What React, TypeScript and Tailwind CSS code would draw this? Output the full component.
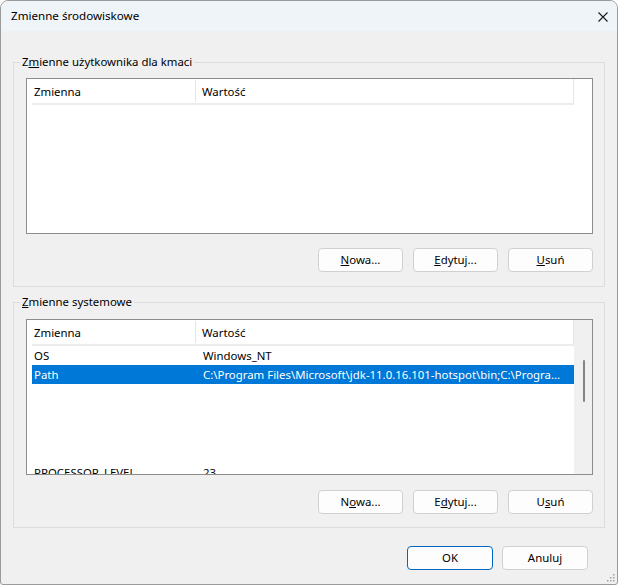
import React from 'react';

const font = { fontFamily: '"Segoe UI", "Noto Sans", sans-serif' };

function Btn({ children, primary }: { children: React.ReactNode; primary?: boolean }) {
  return (
    <div
      className={
        'flex h-[24px] items-center justify-center rounded-[4px] border bg-[#fdfdfd] text-[11.4px] text-black ' +
        (primary ? 'w-[86px] border-[#0067c0]' : 'w-[85px] border-[#d0d0d0]')
      }
    >
      {children}
    </div>
  );
}

function Header() {
  return (
    <div className="flex h-[26px] w-[542px] shrink-0 border-b-2 border-r border-[#ececec] border-r-[#e5e5e5] bg-white text-[11.4px]">
      <div className="my-[1px] flex w-[164px] items-center border-r border-[#e5e5e5] pl-[2px] pt-[2px]">Zmienna</div>
      <div className="flex flex-1 items-center pl-[6px] pt-[2px]">Wartość</div>
    </div>
  );
}

function Row({ name, value, selected }: { name: string; value: string; selected?: boolean }) {
  return (
    <div
      className={
        'flex h-[19px] w-[542px] shrink-0 items-center overflow-hidden text-[11.4px] ' +
        (selected ? 'bg-[#0078d7] text-white' : 'text-black')
      }
    >
      <div className="w-[165px] shrink-0 overflow-hidden whitespace-nowrap pl-[2px]">{name}</div>
      <div className="flex-1 overflow-hidden whitespace-nowrap pl-[6px]">{value}</div>
    </div>
  );
}

export default function App() {
  return (
    <div className="h-[585px] w-[618px] bg-white" style={font}>
      <div className="flex h-[585px] w-[618px] flex-col overflow-hidden rounded-t-[8px] rounded-b-[3px] border border-[#9a9a9a] bg-[#f0f0f0] text-black">
        {/* title bar */}
        <div className="flex h-[30px] shrink-0 items-center justify-between bg-[#eff4f9] pl-[10px] pr-[9px]">
          <span className="text-[11.6px]">Zmienne środowiskowe</span>
          <svg width="10" height="10" viewBox="0 0 10 10" className="mt-[1px]">
            <path d="M0.5 0.5 L9.5 9.5 M9.5 0.5 L0.5 9.5" stroke="#1a1a1a" strokeWidth="1.1" fill="none" />
          </svg>
        </div>

        <div className="relative flex flex-1 flex-col px-[12px]">
          {/* user variables */}
          <fieldset className="mt-[23px] border border-[#dcdcdc] pb-[14px] pl-[12px] pr-[11px]">
            <legend className="ml-[-6px] px-[2px] text-[11.4px] leading-[16px]">
              Z<u>m</u>ienne użytkownika dla kmaci
            </legend>
            <div className="mt-[8px] flex h-[156px] border border-[#8c8c8c] bg-white pl-[5px]">
              <Header />
            </div>
            <div className="mt-[14px] flex justify-end gap-[10px]">
              <Btn><u>N</u>owa...</Btn>
              <Btn><u>E</u>dytuj...</Btn>
              <Btn><u>U</u>suń</Btn>
            </div>
          </fieldset>

          {/* system variables */}
          <fieldset className="mt-[7px] border border-[#dcdcdc] pb-[13px] pl-[12px] pr-[11px]">
            <legend className="ml-[-6px] px-[2px] text-[11.4px] leading-[16px]">
              <u>Z</u>mienne systemowe
            </legend>
            <div className="mt-[9px] flex h-[156px] overflow-hidden border border-[#8c8c8c] bg-white">
              <div className="flex flex-1 flex-col overflow-hidden pl-[5px]">
                <Header />
                <Row name="OS" value="Windows_NT" />
                <Row
                  name="Path"
                  value="C:\Program Files\Microsoft\jdk-11.0.16.101-hotspot\bin;C:\Progra..."
                  selected
                />
                <div className="mt-[79px] shrink-0">
                  <Row name="PROCESSOR_LEVEL" value="23" />
                </div>
              </div>
              <div className="w-[18px] shrink-0 bg-[#f0f0f0] pt-[40px] pl-[9px]">
                <div className="h-[42px] w-[2px] rounded-full bg-[#858585]" />
              </div>
            </div>
            <div className="mt-[15px] flex justify-end gap-[10px]">
              <Btn>N<u>o</u>wa...</Btn>
              <Btn>E<u>d</u>ytuj...</Btn>
              <Btn>U<u>s</u>uń</Btn>
            </div>
          </fieldset>

          {/* dialog buttons */}
          <div className="mt-[18px] flex justify-end gap-[9px] pr-[17px]">
            <Btn primary>OK</Btn>
            <div className="flex h-[24px] w-[86px] items-center justify-center rounded-[4px] border border-[#d0d0d0] bg-[#fdfdfd] text-[11.4px]">
              Anuluj
            </div>
          </div>

          {/* size grip */}
          <svg width="9" height="9" viewBox="0 0 9 9" className="absolute bottom-[2px] right-[2px]">
            {[
              [7, 1], [7, 4], [4, 4], [7, 7], [4, 7], [1, 7],
            ].map(([x, y]) => (
              <rect key={`${x}-${y}`} x={x} y={y} width="1.5" height="1.5" fill="#a0a0a0" />
            ))}
          </svg>
        </div>
      </div>
    </div>
  );
}
